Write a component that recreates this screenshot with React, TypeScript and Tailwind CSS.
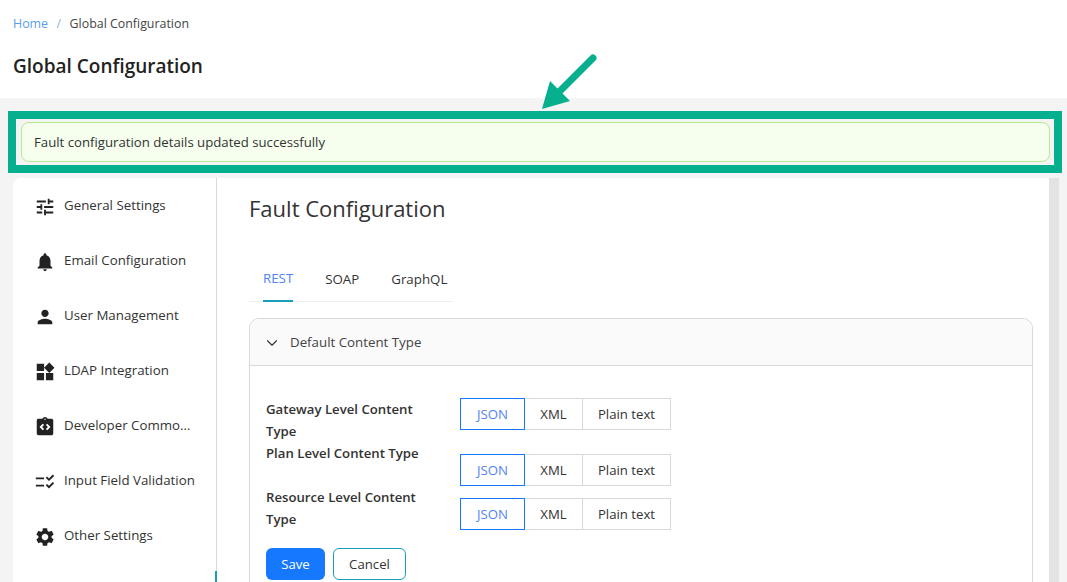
import { MdTune, MdNotifications, MdPerson, MdWidgets, MdIntegrationInstructions, MdChecklistRtl, MdSettings } from 'react-icons/md';
import { ChevronDown } from 'lucide-react';

const navItems = [
  { label: 'General Settings', icon: MdTune },
  { label: 'Email Configuration', icon: MdNotifications },
  { label: 'User Management', icon: MdPerson },
  { label: 'LDAP Integration', icon: MdWidgets },
  { label: 'Developer Commons Settings', icon: MdIntegrationInstructions },
  { label: 'Input Field Validation', icon: MdChecklistRtl },
  { label: 'Other Settings', icon: MdSettings },
];

function ContentTypeSegment({ className = '' }: { className?: string }) {
  return (
    <div className={`flex h-8 text-[13.2px] font-normal text-[#333] ${className}`}>
      <span className="flex w-[65px] items-center justify-center border border-[#1677ff] text-[#4f82f7]">JSON</span>
      <span className="flex w-[58px] items-center justify-center border-y border-r border-[#d9d9d9]">XML</span>
      <span className="flex w-[88px] items-center justify-center border-y border-r border-[#d9d9d9]">Plain text</span>
    </div>
  );
}

export default function App() {
  return (
    <div className="relative flex h-[582px] flex-col overflow-hidden bg-[#f4f4f4] font-['Open_Sans',sans-serif] text-[#333]">
      <header className="h-[98px] shrink-0 bg-white px-[13px] pt-[15px]">
        <div className="flex h-[18px] items-center text-[12.4px] leading-[18px]">
          <span className="text-[#5b9df0]">Home</span>
          <span className="mx-[8.5px] text-[#8ab4ec]">/</span>
          <span className="text-[#444]">Global Configuration</span>
        </div>
        <h1 className="mt-[18px] text-[19px] leading-[30px] font-semibold text-[#222]">Global Configuration</h1>
      </header>

      {/* Highlighted alert */}
      <div className="mt-[13px] mr-[5px] ml-[8px] shrink-0 border-[8px] border-[#06b08f] pt-[3px] pr-[4px] pb-[3px] pl-[5px]">
        <div className="flex h-10 items-center rounded-[8px] border border-[#b7eb8f] bg-[#f6ffed] px-3 pt-px text-[13.2px] text-[#333]">
          Fault configuration details updated successfully
        </div>
      </div>

      <div className="mt-[5px] flex min-h-0 flex-1 pl-[13px]">
        <aside className="relative w-[204px] shrink-0 rounded-tl-[8px] border-r border-[#d9d9d9] bg-white">
          <ul className="flex flex-col gap-[33px] pt-[17px] pl-[21px]">
            {navItems.map(({ label, icon: Icon }) => (
              <li key={label} className="flex h-[22px] items-center gap-[8px] text-[13.3px] text-[#333]">
                <Icon className="mt-[2px] h-[22px] w-[22px] shrink-0 text-[#222]" />
                <span className="w-[132px] truncate">{label}</span>
              </li>
            ))}
          </ul>
          <div className="absolute right-[-1px] bottom-0 h-[11px] w-[2px] bg-[#1a9dbd]" />
        </aside>

        <main className="w-[832px] shrink-0 bg-white pt-[15px] pl-[32px]">
          <h2 className="text-[22px] leading-[30px] text-[#333]">Fault Configuration</h2>

          <div className="mt-[31px] flex h-[48px] w-[204px] gap-8 border-b border-[#eeeeee] pl-[14px] text-[13.3px]">
            <span className="flex h-[48px] items-center border-b-2 border-[#1a9dbd] pt-1 text-[#4f82f7]">REST</span>
            <span className="flex h-[47px] items-center pt-1">SOAP</span>
            <span className="flex h-[47px] items-center pt-1">GraphQL</span>
          </div>

          <div className="mt-[16px] h-[400px] w-[784px] rounded-t-[10px] border border-[#d9d9d9]">
            <div className="flex h-[47px] items-center gap-[9px] rounded-t-[10px] border-b border-[#d9d9d9] bg-[#fafafa] pt-px pl-[13px] text-[13.3px] text-[#444]">
              <ChevronDown className="h-[18px] w-[18px] text-[#333]" strokeWidth={1.5} />
              <span>Default Content Type</span>
            </div>

            <div className="px-4 pt-[32px]">
              <div className="grid grid-cols-[194px_1fr] text-[13.2px] leading-[22px] font-semibold text-[#333]">
                <div className="h-[44px] w-[170px]">Gateway Level Content Type</div>
                <ContentTypeSegment />
                <div className="h-[44px] w-[170px]">Plan Level Content Type</div>
                <ContentTypeSegment className="mt-3" />
                <div className="h-[44px] w-[170px]">Resource Level Content Type</div>
                <ContentTypeSegment className="mt-3" />
              </div>

              <div className="mt-[18px] flex gap-[8px] text-[13.2px]">
                <button className="h-8 w-[59px] rounded-[6px] bg-[#1677ff] pt-px text-white">Save</button>
                <button className="h-8 w-[73px] rounded-[6px] border border-[#1a9dbd] pt-px text-[#333]">Cancel</button>
              </div>
            </div>
          </div>
        </main>

        <div className="w-[10px] shrink-0 bg-[#e3e3e3]" />
      </div>

      {/* Annotation arrow */}
      <svg className="absolute top-[50px] left-[538px] h-[62px] w-[64px]" viewBox="0 0 64 62" fill="none">
        <path d="M55 8 L17 46" stroke="#06b08f" strokeWidth="7" strokeLinecap="round" />
        <path d="M4 59 L12 31 L32 51 Z" fill="#06b08f" />
      </svg>
    </div>
  );
}
